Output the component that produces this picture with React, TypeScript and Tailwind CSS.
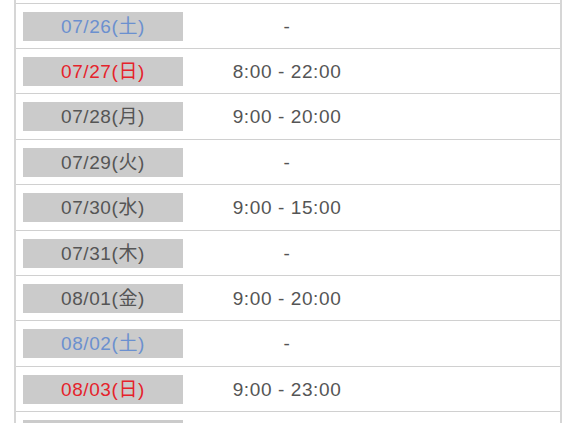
import React from "react";

type Day = {
    date: string;
    hours: string;
    tone: "normal" | "sat" | "sun";
    h: string;
};

const days: Day[] = [
    { date: "07/26(土)", hours: "-", tone: "sat", h: "h-[45px]" },
    { date: "07/27(日)", hours: "8:00 - 22:00", tone: "sun", h: "h-[45px]" },
    { date: "07/28(月)", hours: "9:00 - 20:00", tone: "normal", h: "h-[46px]" },
    { date: "07/29(火)", hours: "-", tone: "normal", h: "h-[45px]" },
    { date: "07/30(水)", hours: "9:00 - 15:00", tone: "normal", h: "h-[46px]" },
    { date: "07/31(木)", hours: "-", tone: "normal", h: "h-[45px]" },
    { date: "08/01(金)", hours: "9:00 - 20:00", tone: "normal", h: "h-[45px]" },
    { date: "08/02(土)", hours: "-", tone: "sat", h: "h-[46px]" },
    { date: "08/03(日)", hours: "9:00 - 23:00", tone: "sun", h: "h-[45px]" },
    // next row only peeks in at the bottom edge
    { date: "", hours: "", tone: "normal", h: "h-[45px]" },
];

const toneClass = {
    normal: "text-[#555555]",
    sat: "text-[#6b90cf]",
    sun: "text-[#e5232b]",
};

const App = () => {
    return <div className="h-[423px] overflow-hidden bg-white font-['Liberation_Sans','Noto_Sans_CJK_JP',sans-serif]">
        <div className="ml-[14px] w-[548px] border-x-2 border-[#d6d6d6]">
            <div className="h-[4px] border-b border-[#d0d0d0]" />
            {days.map((d, i) => (
                <div key={i} className={`${d.h} flex items-center border-b border-[#d0d0d0] pl-[7px]`}>
                    <div className={`w-[160px] h-[29px] flex items-center justify-center bg-[#cbcbcb] text-[19px] tracking-[0.6px] leading-none ${toneClass[d.tone]}`}>
                        {d.date}
                    </div>
                    <div className="w-[208px] text-center text-[19px] tracking-[0.6px] leading-none text-[#555555]">
                        {d.hours}
                    </div>
                </div>
            ))}
        </div>
    </div>
}

export default App;
